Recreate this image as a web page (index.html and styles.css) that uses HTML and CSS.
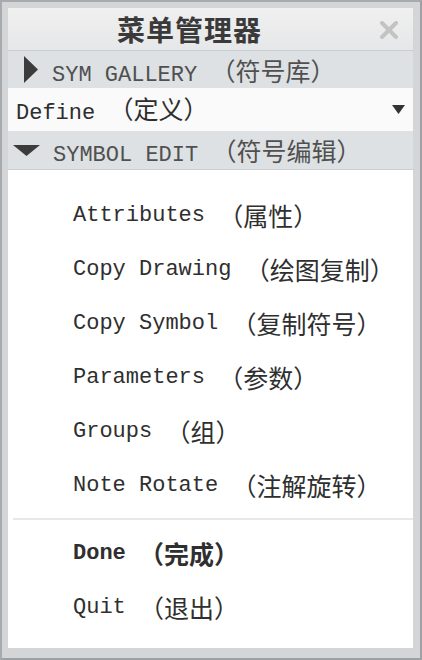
FILE: index.html
```html
<!DOCTYPE html>
<html lang="zh-CN">
<head>
    <meta charset="UTF-8">
    <title>菜单管理器</title>
    <link rel="stylesheet" href="styles.css">
</head>
<body>

<div class="window">
    <div class="panel">

        <!-- Title -->
        <div class="title-bar">
            <span class="title">菜单管理器</span>
            <svg class="close" width="18" height="18" viewBox="0 0 18 18">
                <path d="M2 2 L16 16 M16 2 L2 16" stroke="#c3c3c3" stroke-width="4" stroke-linecap="round"/>
            </svg>
        </div>

        <!-- SYM GALLERY (closed) -->
        <div class="group-head">
            <svg class="arrow-right" width="14" height="27" viewBox="0 0 14 27">
                <polygon points="0,0 14,13.5 0,27" fill="#3c3c3c"/>
            </svg>
            <span class="label">SYM GALLERY <span class="cn">（符号库）</span></span>
        </div>

        <!-- Define dropdown -->
        <div class="select-row">
            <span class="label">Define <span class="cn">（定义）</span></span>
            <svg class="caret" width="13" height="9" viewBox="0 0 13 9">
                <polygon points="0,0 13,0 6.5,9" fill="#333"/>
            </svg>
        </div>

        <!-- SYMBOL EDIT (open) -->
        <div class="group-head open">
            <svg class="arrow-down" width="27" height="11" viewBox="0 0 27 11">
                <polygon points="0,0 27,0 13.5,11" fill="#3c3c3c"/>
            </svg>
            <span class="label">SYMBOL EDIT <span class="cn">（符号编辑）</span></span>
        </div>

        <div class="menu-body">
            <ul class="menu-list">
                <li>Attributes <span class="cn">（属性）</span></li>
                <li>Copy Drawing <span class="cn">（绘图复制）</span></li>
                <li>Copy Symbol <span class="cn">（复制符号）</span></li>
                <li>Parameters <span class="cn">（参数）</span></li>
                <li>Groups <span class="cn">（组）</span></li>
                <li>Note Rotate <span class="cn">（注解旋转）</span></li>
            </ul>
            <div class="separator"></div>
            <ul class="menu-list">
                <li class="done">Done <span class="cn">（完成）</span></li>
                <li>Quit <span class="cn">（退出）</span></li>
            </ul>
        </div>

    </div>
</div>

</body>
</html>
```

FILE: styles.css
```css
/* Base */
* {
    box-sizing: border-box;
}

body {
    margin: 0;
    background-color: #c7c9cb;
    font-family: "Liberation Mono", "Noto Sans CJK SC", monospace;
    font-size: 22px;
    color: #333;
}

.cn {
    font-family: "Noto Sans CJK SC", sans-serif;
    font-size: 25px;
}

/* Window frame */
.window {
    width: 422px;
    height: 660px;
    border: 2px solid #a8abad;
    border-right-color: #9ea1a3;
    border-bottom-color: #9ea1a3;
    background-color: #d3d5d7;
    padding: 6px 7px 10px 6px;
}

.panel {
    height: 100%;
    background-color: #fff;
    display: flex;
    flex-direction: column;
}

/* Title bar */
.title-bar {
    height: 43px;
    display: flex;
    align-items: center;
    padding-left: 109px;
    padding-right: 15px;
    background: linear-gradient(#f0f0f0, #e6e7e8);
    border-bottom: 1px solid #c9cdcf;
}

.title {
    font-family: "Noto Sans CJK SC", sans-serif;
    font-weight: bold;
    font-size: 28px;
    color: #3a3a3a;
    letter-spacing: 1px;
    flex: 1;
}

.close {
    margin-top: 2px;
}

/* Group headers */
.group-head {
    height: 37px;
    display: flex;
    align-items: center;
    background-color: #dde1e3;
    color: #505050;
    padding-left: 16px;
}

.group-head .arrow-right {
    margin-right: 14px;
}

.group-head.open {
    height: 39px;
    padding-left: 5px;
    border-bottom: 1px solid #ccd0d2;
}

.group-head.open .arrow-down {
    margin-right: 13px;
}

/* Dropdown row */
.select-row {
    height: 43px;
    display: flex;
    align-items: center;
    justify-content: space-between;
    background-color: #fafafa;
    padding: 0 8px 4px 8px;
    color: #2e2e2e;
}

.select-row .caret {
    margin-top: 4px;
}

/* Menu items */
.menu-body {
    flex: 1;
    padding-top: 18px;
}

.menu-list {
    list-style: none;
    margin: 0;
    padding: 0;
}

.menu-list li {
    height: 54px;
    display: flex;
    align-items: center;
    padding-left: 65px;
    color: #2f2f2f;
    white-space: pre;
}

.menu-list li.done {
    font-weight: bold;
}

.separator {
    height: 2px;
    background-color: #e6e8e9;
    margin: 6px 0 6px 5px;
}
```
